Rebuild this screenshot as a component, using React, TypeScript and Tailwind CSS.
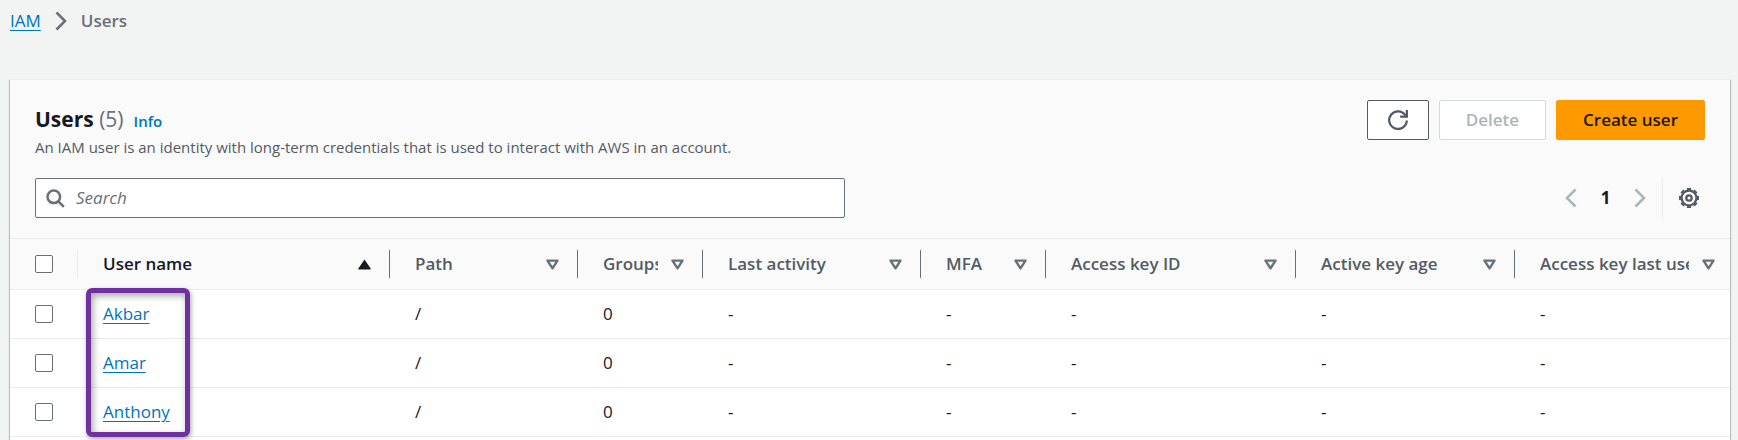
import React from "react";

type Column = { label: string; width?: string; sorted?: boolean; last?: boolean };

const columns: Column[] = [
  { label: "User name", width: "w-[312px]", sorted: true },
  { label: "Path", width: "w-[188px]" },
  { label: "Groups", width: "w-[125px]" },
  { label: "Last activity", width: "w-[218px]" },
  { label: "MFA", width: "w-[125px]" },
  { label: "Access key ID", width: "w-[250px]" },
  { label: "Active key age", width: "w-[219px]" },
  { label: "Access key last used", last: true },
];

const users = ["Akbar", "Amar", "Anthony"].map((name) => ({
  name,
  values: ["/", "0", "-", "-", "-", "-", "-"],
}));

function Chevron({ className, left = false }: { className: string; left?: boolean }) {
  return (
    <svg viewBox="0 0 12 20" className={className} fill="none" stroke="currentColor" strokeWidth="2.6" aria-hidden="true">
      <path d={left ? "M10.5 1.5 2 10l8.5 8.5" : "M1.5 1.5 10 10l-8.5 8.5"} />
    </svg>
  );
}

function SortIcon({ sorted }: { sorted?: boolean }) {
  return sorted ? (
    <svg viewBox="0 0 13 11" className="h-[11px] w-[13px] shrink-0 text-[#16191f]" fill="currentColor" aria-hidden="true">
      <path d="M6.5.4 12.8 9.8 12.3 10.6H.7L.2 9.8z" />
    </svg>
  ) : (
    <svg viewBox="0 0 13 11" className="h-[11px] w-[13px] shrink-0 text-[#687078]" fill="none" stroke="currentColor" strokeWidth="2.4" strokeLinejoin="round" aria-hidden="true">
      <path d="M1.5 1.6h10L6.5 9.3z" />
    </svg>
  );
}

function RefreshIcon() {
  return (
    <svg viewBox="0 0 20 20" className="size-5" fill="none" stroke="currentColor" strokeWidth="2.3" aria-hidden="true">
      <path d="M18.8 10.5A8.8 8.8 0 1 1 17.3 5.2L18.8 7" />
      <path d="M18.9 0v6.7h-6.8" />
    </svg>
  );
}

function GearIcon() {
  const teeth = [0, 45, 90, 135, 180, 225, 270, 315];
  return (
    <svg viewBox="0 0 20 20" className="size-5" fill="none" stroke="currentColor" aria-hidden="true">
      <circle cx="10" cy="10" r="7.4" strokeWidth="2.2" />
      <circle cx="10" cy="10" r="2.7" strokeWidth="2.3" />
      {teeth.map((a) => (
        <path key={a} d="M7.9 1.2h4.2" strokeWidth="2.4" transform={`rotate(${a} 10 10)`} />
      ))}
    </svg>
  );
}

function Checkbox({ label }: { label: string }) {
  return (
    <input
      type="checkbox"
      aria-label={label}
      className="block size-[18px] appearance-none rounded-[2px] border border-[#687078] bg-white checked:bg-[#0073bb]"
    />
  );
}

export default function App() {
  return (
    <div className="flex min-h-screen flex-col bg-[#f2f3f3] pr-2 pl-2.5 font-['Open_Sans','Noto_Sans',sans-serif] text-[17px] leading-6 text-[#16191f]">
      <nav aria-label="Breadcrumbs" className="pt-[9px]">
        <ol className="flex items-center text-[#687078]">
          <li>
            <a href="#iam" className="text-[#0073bb] underline underline-offset-3">IAM</a>
          </li>
          <li className="px-3.5">
            <Chevron className="h-5 w-3" />
          </li>
          <li className="font-semibold" aria-current="page">Users</li>
        </ol>
      </nav>

      <main className="mt-[46px] flex grow flex-col border-t border-[#eaeded] bg-white shadow-[0_1px_1px_0_rgba(0,28,36,0.3),1px_1px_1px_0_rgba(0,28,36,0.2),-1px_1px_1px_0_rgba(0,28,36,0.2)]">
        <header className="bg-[#fafafa] px-[25px] py-5">
          <div className="flex items-start justify-between">
            <div className="pt-[3px]">
              <div className="flex items-baseline gap-2.5">
                <h1 className="text-[21px] leading-8 font-bold">
                  Users <span className="font-normal text-[#687078]">(5)</span>
                </h1>
                <a href="#info" className="text-[15px] font-semibold text-[#0073bb]">Info</a>
              </div>
              <p className="text-[15px] leading-6 text-[#545b64]">
                An IAM user is an identity with long-term credentials that is used to interact with AWS in an account.
              </p>
            </div>
            <div className="flex gap-2.5 font-semibold">
              <button type="button" aria-label="Refresh" className="flex h-10 w-[62px] items-center justify-center rounded-[2px] border border-[#545b64] bg-white text-[#545b64]">
                <RefreshIcon />
              </button>
              <button type="button" disabled className="h-10 rounded-[2px] border border-[#d5dbdb] bg-white px-[26px] text-[#aab7b8]">
                Delete
              </button>
              <button type="button" className="h-10 rounded-[2px] border border-[#ff9900] bg-[#ff9900] px-[26px]">
                Create user
              </button>
            </div>
          </div>

          <div className="mt-[19px] flex items-center justify-between">
            <label className="flex h-10 w-[810px] items-center gap-[11px] rounded-[2px] border border-[#687078] bg-white px-2.5 text-[#687078]">
              <svg viewBox="0 0 19 19" className="size-[19px]" fill="none" stroke="currentColor" strokeWidth="2.5" aria-hidden="true">
                <circle cx="7.8" cy="7.8" r="6.3" />
                <path d="m12.3 12.3 5.6 5.6" />
              </svg>
              <input type="search" aria-label="Search users" placeholder="Search" className="grow bg-transparent outline-none placeholder:text-[#687078] placeholder:italic" />
            </label>
            <div className="flex h-10 items-center">
              <button type="button" aria-label="Previous page" disabled className="text-[#aab7b8]">
                <Chevron left className="h-5 w-3" />
              </button>
              <button type="button" aria-current="page" className="w-[57px] font-bold">1</button>
              <button type="button" aria-label="Next page" disabled className="text-[#aab7b8]">
                <Chevron className="h-5 w-3" />
              </button>
              <span className="ml-4 h-10 w-px bg-[#eaeded]" />
              <button type="button" aria-label="Preferences" className="mr-1.5 ml-4 text-[#545b64]">
                <GearIcon />
              </button>
            </div>
          </div>
        </header>

        <div className="relative">
          <table className="w-full table-fixed border-separate border-spacing-0">
            <thead className="bg-[#fafafa] text-left">
              <tr>
                <th scope="col" className="h-[52px] w-[68px] border-y border-[#eaeded] p-0">
                  <div className="flex h-7 items-center border-r border-[#eaeded] pl-[25px]">
                    <Checkbox label="Select all users" />
                  </div>
                </th>
                {columns.map((c) => (
                  <th
                    key={c.label}
                    scope="col"
                    aria-sort={c.sorted ? "ascending" : undefined}
                    className={`border-y border-[#eaeded] p-0 font-semibold ${c.width ?? ""} ${c.sorted ? "" : "text-[#545b64]"}`}
                  >
                    <div className={`flex h-7 items-center gap-[13px] pl-[25px] ${c.last ? "pr-[15px]" : "border-r border-[#687078] pr-[18px]"}`}>
                      <span className="min-w-0 grow overflow-hidden whitespace-nowrap">{c.label}</span>
                      <SortIcon sorted={c.sorted} />
                    </div>
                  </th>
                ))}
              </tr>
            </thead>
            <tbody>
              {users.map((u) => (
                <tr key={u.name}>
                  <td className="h-[49px] border-b border-[#eaeded] py-0 pr-0 pl-[25px]">
                    <Checkbox label={`Select ${u.name}`} />
                  </td>
                  <td className="border-b border-[#eaeded] py-0 pr-0 pl-[25px]">
                    <a href={`#${u.name}`} className="text-[#0073bb] underline underline-offset-3">{u.name}</a>
                  </td>
                  {u.values.map((v, i) => (
                    <td key={i} className="border-b border-[#eaeded] py-0 pr-0 pl-[25px]">{v}</td>
                  ))}
                </tr>
              ))}
            </tbody>
          </table>
          <div className="pointer-events-none absolute top-[50px] left-[76px] h-[149px] w-[104px] rounded-md border-5 border-[#7030a0] shadow-[1px_2px_5px_rgba(0,0,0,0.35),inset_2px_3px_7px_rgba(0,0,0,0.35)]" />
        </div>
      </main>
    </div>
  );
}
